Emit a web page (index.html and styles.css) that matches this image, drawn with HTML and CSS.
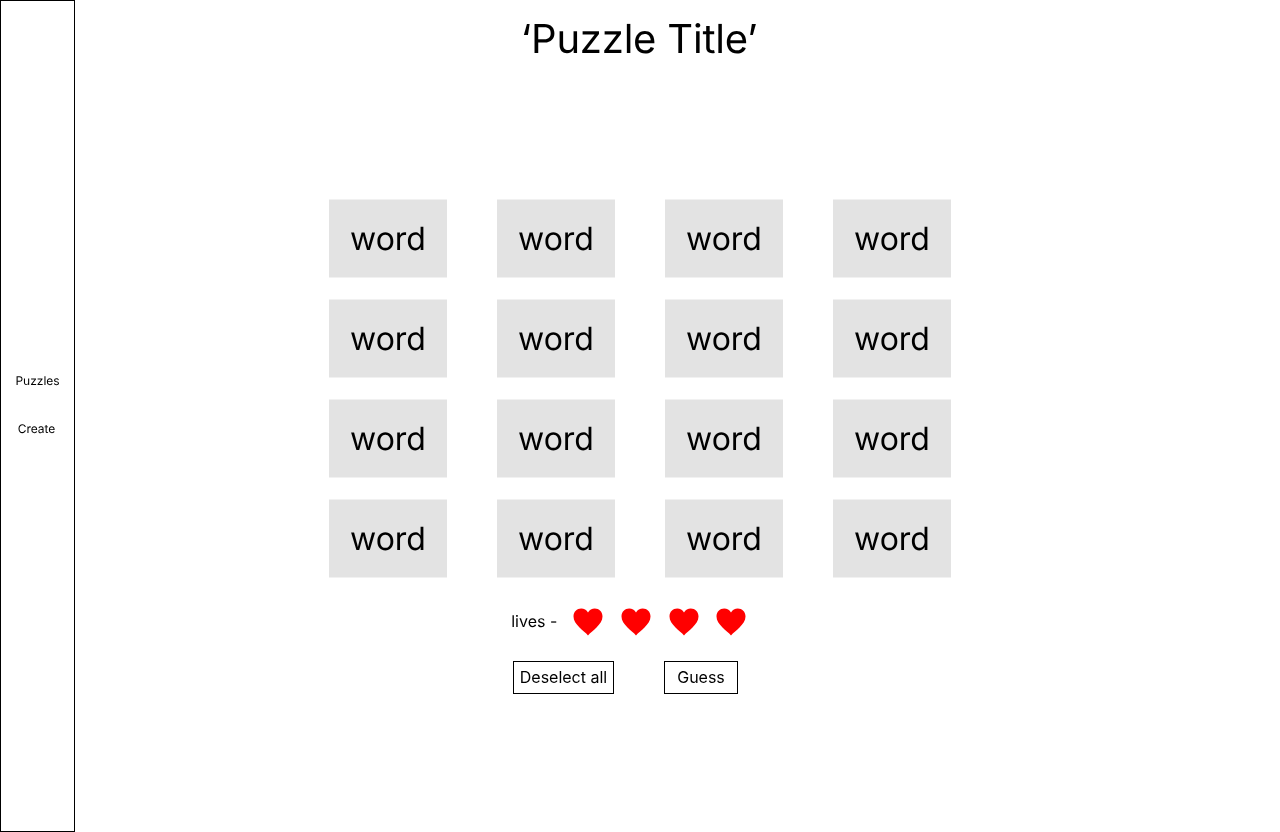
FILE: index.html
```html
<!DOCTYPE html>
<html lang="en">
<head>
<meta charset="utf-8">
<title>Puzzle</title>
<link rel="stylesheet" href="styles.css">
</head>
<body>
<nav class="sidebar">
  <a class="nav-link">Puzzles</a>
  <a class="nav-link nav-create">Create</a>
</nav>
<main class="main">
  <h1 class="title">‘Puzzle Title’</h1>
  <div class="grid">
    <div class="card">word</div><div class="card">word</div><div class="card">word</div><div class="card">word</div>
    <div class="card">word</div><div class="card">word</div><div class="card">word</div><div class="card">word</div>
    <div class="card">word</div><div class="card">word</div><div class="card">word</div><div class="card">word</div>
    <div class="card">word</div><div class="card">word</div><div class="card">word</div><div class="card">word</div>
  </div>
  <div class="lives">
    <span class="lives-label">lives -</span>
    <svg class="heart" viewBox="0 0 30 28"><path d="M15 27.5 C13 25 9.5 22.5 6.5 19.5 C3 16 0.5 12.5 0.5 8.5 C0.5 3.5 4 0.5 8.2 0.5 C11 0.5 13.6 2 15 4.5 C16.4 2 19 0.5 21.8 0.5 C26 0.5 29.5 3.5 29.5 8.5 C29.5 12.5 27 16 23.5 19.5 C20.5 22.5 17 25 15 27.5 Z"/></svg>
    <svg class="heart" viewBox="0 0 30 28"><path d="M15 27.5 C13 25 9.5 22.5 6.5 19.5 C3 16 0.5 12.5 0.5 8.5 C0.5 3.5 4 0.5 8.2 0.5 C11 0.5 13.6 2 15 4.5 C16.4 2 19 0.5 21.8 0.5 C26 0.5 29.5 3.5 29.5 8.5 C29.5 12.5 27 16 23.5 19.5 C20.5 22.5 17 25 15 27.5 Z"/></svg>
    <svg class="heart" viewBox="0 0 30 28"><path d="M15 27.5 C13 25 9.5 22.5 6.5 19.5 C3 16 0.5 12.5 0.5 8.5 C0.5 3.5 4 0.5 8.2 0.5 C11 0.5 13.6 2 15 4.5 C16.4 2 19 0.5 21.8 0.5 C26 0.5 29.5 3.5 29.5 8.5 C29.5 12.5 27 16 23.5 19.5 C20.5 22.5 17 25 15 27.5 Z"/></svg>
    <svg class="heart" viewBox="0 0 30 28"><path d="M15 27.5 C13 25 9.5 22.5 6.5 19.5 C3 16 0.5 12.5 0.5 8.5 C0.5 3.5 4 0.5 8.2 0.5 C11 0.5 13.6 2 15 4.5 C16.4 2 19 0.5 21.8 0.5 C26 0.5 29.5 3.5 29.5 8.5 C29.5 12.5 27 16 23.5 19.5 C20.5 22.5 17 25 15 27.5 Z"/></svg>
  </div>
  <div class="actions">
    <button class="btn btn-deselect">Deselect all</button>
    <button class="btn btn-guess">Guess</button>
  </div>
</main>
</body>
</html>
```
FILE: styles.css
```css
* { box-sizing: border-box; }
html, body { height: 100%; }
body {
  margin: 0;
  display: flex;
  height: 832px;
  overflow: hidden;
  background: #fff;
  color: #000;
  font-family: Inter, "Liberation Sans", sans-serif;
  text-rendering: geometricPrecision;
}
.sidebar {
  width: 75px;
  height: 832px;
  flex: none;
  border: 1px solid #000;
  display: flex;
  flex-direction: column;
  align-items: center;
  gap: 33px;
  padding-top: 372px;
  font-size: 12px;
  line-height: 15px;
  will-change: transform;
}
.nav-link { display: block; }
.nav-create { margin-right: 2px; }
.main {
  flex: 1;
  padding-right: 75px;
  display: flex;
  flex-direction: column;
  align-items: center;
  will-change: transform;
}
.title {
  margin: 15px 2px 0 0;
  font-size: 40px;
  font-weight: 400;
  line-height: 48px;
  letter-spacing: -0.2px;
}
.grid {
  margin-top: 136px;
  display: grid;
  grid-template-columns: repeat(4, 118px);
  grid-auto-rows: 78px;
  column-gap: 50px;
  row-gap: 22px;
  transform: translateY(0.5px);
}
.card {
  background: #e3e3e3;
  display: flex;
  align-items: center;
  justify-content: center;
  padding: 0 0 2px 0;
  font-size: 32px;
}
.lives {
  margin-top: 31px;
  margin-right: 22.5px;
  display: flex;
  align-items: center;
  height: 28px;
  font-size: 16px;
}
.lives-label { margin-right: 16px; padding-bottom: 2px; }
.heart {
  width: 30px;
  height: 28px;
  fill: #f00;
  margin-right: 17.67px;
}
.heart:last-child { margin-right: 0; }
.actions {
  margin-top: 25px;
  margin-right: 29px;
  display: flex;
  gap: 50px;
}
.btn {
  height: 33px;
  padding: 0 0 2px;
  background: #fff;
  border: 1px solid #000;
  border-radius: 0;
  color: #000;
  font: 400 16px Inter, "Liberation Sans", sans-serif;
}
.btn-deselect { width: 101px; }
.btn-guess { width: 74px; }
```
